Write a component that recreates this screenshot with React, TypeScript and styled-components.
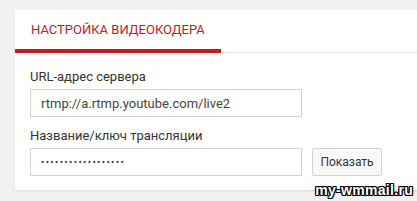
import React from "react";
import styled, { createGlobalStyle } from "styled-components";

const Global = createGlobalStyle`
  html, body { margin: 0; padding: 0; background: #f1f1f1; }
  body { font-family: Roboto, "Noto Sans", Arial, sans-serif; }
`;

const Page = styled.div`
  position: relative;
  width: 417px;
  height: 201px;
  padding: 10px 0 0 15px;
  box-sizing: border-box;
  overflow: hidden;
`;

const Card = styled.section`
  background: #fff;
  height: 180px;
  box-shadow: 0 1px 2px rgba(0, 0, 0, 0.1);
  display: flex;
  flex-direction: column;
`;

const Header = styled.div`
  display: flex;
  height: 43px;
  box-shadow: inset 0 -1px 0 #e2e2e2;
`;

const Tab = styled.div`
  display: flex;
  align-items: center;
  padding: 0 16px;
  height: 43px;
  box-sizing: border-box;
  border-bottom: 4px solid #cc181e;
  color: #cc181e;
  font-size: 13px;
  font-weight: 400;
  text-transform: uppercase;
`;

const Body = styled.div`
  padding: 16px 16px 14px 15px;
  display: flex;
  flex-direction: column;
  gap: 11px;
`;

const Field = styled.div`
  display: flex;
  flex-direction: column;
  gap: 5px;
`;

const Label = styled.label`
  font-size: 13px;
  line-height: 15px;
  color: #333;
`;

const Row = styled.div`
  display: flex;
  gap: 10px;
`;

const Input = styled.input`
  width: 272px;
  height: 28px;
  box-sizing: border-box;
  border: 1px solid #d3d3d3;
  border-radius: 0;
  padding: 0 10px;
  font-family: Roboto, "Noto Sans", Arial, sans-serif;
  font-size: 13px;
  color: #444;
  outline: none;
  background: #fff;
  &[type="password"] {
    font-size: 10px;
    letter-spacing: 1.3px;
  }
`;

const Button = styled.button`
  height: 28px;
  width: 70px;
  box-sizing: border-box;
  padding: 0;
  border: 1px solid #d3d3d3;
  border-radius: 2px;
  background: #f8f8f8;
  color: #333;
  font-family: Roboto, "Noto Sans", Arial, sans-serif;
  font-size: 12px;
  font-weight: 400;
  cursor: pointer;
`;

const Watermark = styled.div`
  position: absolute;
  right: 4px;
  bottom: 3px;
  font-family: "Liberation Sans", Arial, sans-serif;
  font-weight: 700;
  font-size: 14px;
  line-height: 15px;
  color: #fff;
  letter-spacing: 0.3px;
  text-shadow: -1px -1px 0 #000, 1px -1px 0 #000, -1px 1px 0 #000, 1px 1px 0 #000,
    0 1px 0 #000, 0 -1px 0 #000, 1px 0 0 #000, -1px 0 0 #000;
`;

export default function App() {
  return (
    <>
      <Global />
      <Page>
        <Card>
          <Header>
            <Tab>Настройка видеокодера</Tab>
          </Header>
          <Body>
            <Field>
              <Label>URL-адрес сервера</Label>
              <Input readOnly defaultValue="rtmp://a.rtmp.youtube.com/live2" />
            </Field>
            <Field>
              <Label>Название/ключ трансляции</Label>
              <Row>
                <Input readOnly type="password" defaultValue="xxxxxxxxxxxxxxxxxx" />
                <Button>Показать</Button>
              </Row>
            </Field>
          </Body>
        </Card>
        <Watermark>my-wmmail.ru</Watermark>
      </Page>
    </>
  );
}
